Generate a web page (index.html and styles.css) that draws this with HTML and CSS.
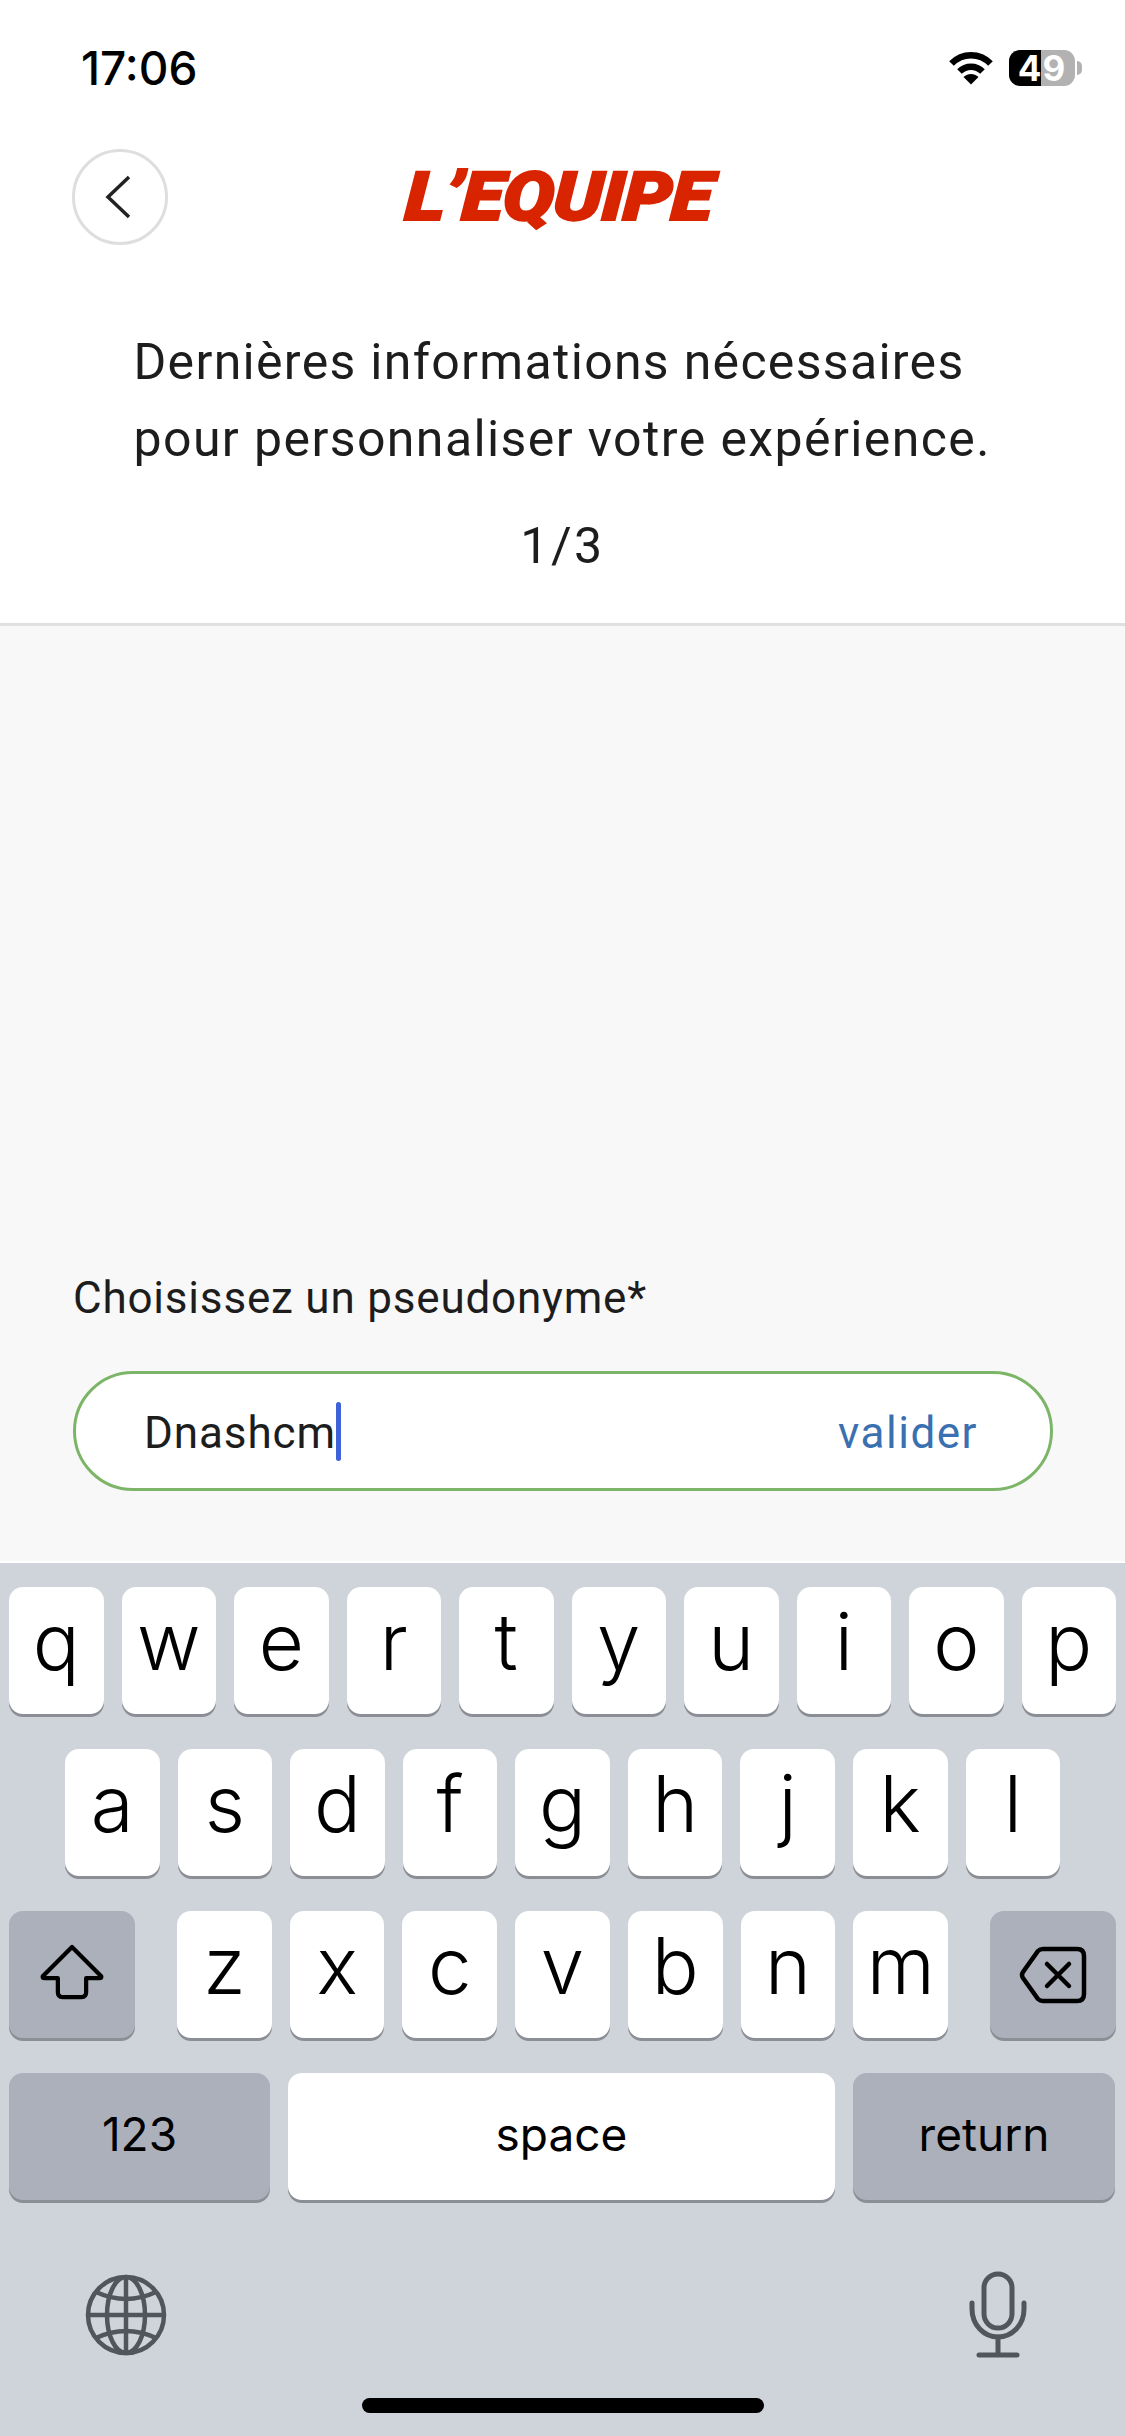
FILE: index.html
```html
<!DOCTYPE html>
<html lang="fr">
<head>
    <meta charset="UTF-8">
    <meta name="viewport" content="width=device-width, initial-scale=1.0">
    <title>L'Équipe - Pseudonyme</title>
    <link rel="stylesheet" href="styles.css">
</head>
<body>
    <header class="top">
        <div class="status-bar">
            <span class="time">17:06</span>
            <div class="status-icons">
                <svg class="wifi" viewBox="0 0 46 34" width="46" height="34">
                    <path d="M3.5 12.5 C14.5 1.5 31.5 1.5 42.5 12.5" fill="none" stroke="#000" stroke-width="6.5"/>
                    <path d="M11.5 20.5 C18 14 28 14 34.5 20.5" fill="none" stroke="#000" stroke-width="6.5"/>
                    <path d="M15.5 26 C20 22 26 22 30.5 26 L23 33.5 Z" fill="#000"/>
                </svg>
                <div class="battery"><span class="battery-level">49</span></div>
                <div class="battery-nub"></div>
            </div>
        </div>

        <nav class="nav">
            <button class="back-btn" type="button">
                <svg viewBox="0 0 26 44" width="26" height="44">
                    <path d="M24 2 L3 22 L24 42" fill="none" stroke="#222" stroke-width="3.5"/>
                </svg>
            </button>
            <div class="logo">L’EQUIPE</div>
            <div></div>
        </nav>

        <div class="intro">
            <p class="intro-text">Dernières informations nécessaires<br><span class="intro-line">pour personnaliser votre expérience.</span></p>
            <p class="step">1/3</p>
        </div>
    </header>

    <main class="content">
        <label class="field-label" for="pseudo">Choisissez un pseudonyme*</label>
        <div class="field">
            <span class="field-value" id="pseudo">Dnashcm</span>
            <span class="caret"></span>
            <span class="field-action">valider</span>
        </div>
    </main>

    <section class="keyboard">
        <div class="kb-row">
            <div class="key">q</div>
            <div class="key">w</div>
            <div class="key">e</div>
            <div class="key">r</div>
            <div class="key">t</div>
            <div class="key">y</div>
            <div class="key">u</div>
            <div class="key">i</div>
            <div class="key">o</div>
            <div class="key">p</div>
        </div>
        <div class="kb-row kb-row-2">
            <div class="key">a</div>
            <div class="key">s</div>
            <div class="key">d</div>
            <div class="key">f</div>
            <div class="key">g</div>
            <div class="key">h</div>
            <div class="key">j</div>
            <div class="key">k</div>
            <div class="key">l</div>
        </div>
        <div class="kb-row kb-row-3">
            <div class="key key-fn key-side">
                <svg class="shift-icon" viewBox="0 0 70 60" width="66" height="57">
                    <path d="M35 3 L4 34 Q3 36 6 36 L20 36 L20 51 Q20 56 25 56 L45 56 Q50 56 50 51 L50 36 L64 36 Q67 36 66 34 Z" fill="none" stroke="#000" stroke-width="4.5" stroke-linejoin="round"/>
                </svg>
            </div>
            <div class="kb-letters">
                <div class="key">z</div>
                <div class="key">x</div>
                <div class="key">c</div>
                <div class="key">v</div>
                <div class="key">b</div>
                <div class="key">n</div>
                <div class="key">m</div>
            </div>
            <div class="key key-fn key-side">
                <svg viewBox="0 0 68 58" width="68" height="58">
                    <path d="M24 3 L58 3 Q65 3 65 10 L65 48 Q65 55 58 55 L24 55 Q21 55 19 53 L4 32 Q2 29 4 26 L19 5 Q21 3 24 3 Z" fill="none" stroke="#000" stroke-width="4.5"/>
                    <path d="M28 18 L50 40 M50 18 L28 40" fill="none" stroke="#000" stroke-width="4.5" stroke-linecap="round"/>
                </svg>
            </div>
        </div>
        <div class="kb-row kb-row-4">
            <div class="key key-fn key-wide key-text">123</div>
            <div class="key key-space key-text">space</div>
            <div class="key key-fn key-wide key-return key-text">return</div>
        </div>
        <div class="kb-bottom">
            <svg viewBox="0 0 84 84" width="84" height="84">
                <g fill="none" stroke="#50565d" stroke-width="4.5">
                    <circle cx="42" cy="42" r="38"/>
                    <ellipse cx="42" cy="42" rx="19" ry="38"/>
                    <path d="M42 4 V80 M4 42 H80"/>
                    <path d="M12 19 Q42 33 72 19 M12 65 Q42 51 72 65"/>
                </g>
            </svg>
            <svg viewBox="0 0 60 88" width="60" height="88">
                <g fill="none" stroke="#50565d" stroke-width="5" stroke-linecap="round">
                    <rect x="16" y="3" width="28" height="54" rx="14"/>
                    <path d="M4 32 V38 C4 54 16 66 30 66 C44 66 56 54 56 38 V32"/>
                    <path d="M30 66 V84 M11 84 H49"/>
                </g>
            </svg>
        </div>
        <div class="home-indicator"></div>
    </section>
</body>
</html>
```

FILE: styles.css
```css
* {
    box-sizing: border-box;
}

body {
    margin: 0;
    width: 1125px;
    height: 2436px;
    display: flex;
    flex-direction: column;
    background-color: #fff;
    font-family: Roboto, sans-serif;
    color: #1d1d1d;
    overflow: hidden;
}

.top {
    height: 626px;
    background: #fff;
    border-bottom: 3px solid #e0e0e0;
}

.status-bar {
    height: 149px;
    padding: 42px 43px 0 81px;
    display: flex;
    justify-content: space-between;
    align-items: flex-start;
}

.time {
    font-family: Inter, sans-serif;
    font-size: 46px;
    line-height: 52px;
    font-weight: 500;
    color: #000;
}

.status-icons {
    display: flex;
    align-items: center;
    margin-top: 8px;
}

.wifi {
    margin-right: 15px;
}

.battery {
    width: 66px;
    height: 36px;
    border-radius: 11px;
    background: linear-gradient(90deg, #000 0, #000 32px, #b2b2b2 32px);
    text-align: center;
}

.battery-level {
    font-family: Inter, sans-serif;
    font-size: 35px;
    line-height: 36px;
    font-weight: 700;
    letter-spacing: 1px;
    color: #fff;
    display: block;
}

.battery-nub {
    width: 5px;
    height: 14px;
    margin-left: 2px;
    background: #b2b2b2;
    border-radius: 0 5px 5px 0;
}

.nav {
    display: grid;
    grid-template-columns: 1fr auto 1fr;
    align-items: center;
    padding-left: 72px;
    height: 96px;
}

.back-btn {
    width: 96px;
    height: 96px;
    padding: 0 5px 0 0;
    border: 3px solid #dedede;
    border-radius: 50%;
    background: #fff;
    display: flex;
    align-items: center;
    justify-content: center;
}

.logo {
    font-family: Roboto, sans-serif;
    font-style: italic;
    font-weight: 900;
    font-size: 68px;
    line-height: 70px;
    letter-spacing: -0.8px;
    color: #d92400;
    -webkit-text-stroke: 2px #d92400;
    margin-left: -80px;
    transform: scaleX(1.13) skewX(-3deg);
}

.intro {
    padding-top: 79px;
}

.intro-text {
    width: 858px;
    margin: 0 auto;
    font-size: 50px;
    line-height: 77px;
    letter-spacing: 1.3px;
    white-space: nowrap;
}

.intro-line {
    letter-spacing: 1.4px;
}

.step {
    margin: 30px 0 0;
    font-size: 50px;
    line-height: 77px;
    letter-spacing: 2.5px;
    text-align: center;
}

.content {
    flex: 1;
    background: #f8f8f8;
    padding: 0 72px 70px 73px;
    display: flex;
    flex-direction: column;
    justify-content: flex-end;
    border-bottom: 2px solid #fff;
}

.field-label {
    font-size: 44px;
    line-height: 56px;
    letter-spacing: 0.8px;
    margin-bottom: 45px;
}

.field {
    height: 120px;
    padding: 0 72px 0 68px;
    border: 3px solid #7cb568;
    border-radius: 60px;
    background: #fff;
    display: flex;
    align-items: center;
    font-size: 44px;
    letter-spacing: 0.9px;
}

.field-value {
    padding-top: 3px;
}

.caret {
    width: 5px;
    height: 59px;
    border-radius: 3px;
    background: #3f62d8;
}

.field-action {
    margin-left: auto;
    padding-top: 3px;
    color: #3a70b0;
    letter-spacing: 1.5px;
}

.keyboard {
    height: 873px;
    padding-top: 24px;
    background: #cfd3da;
    font-family: Inter, sans-serif;
    display: flex;
    flex-direction: column;
}

.kb-row {
    display: flex;
    gap: 18px;
    padding: 0 9px;
    margin-bottom: 35px;
}

.kb-row-2 {
    padding: 0 65px;
}

.kb-row-3 {
    justify-content: space-between;
}

.kb-row-4 {
    padding-right: 10px;
}

.kb-letters {
    display: flex;
    gap: 18px;
    flex: 1;
    padding: 0 24px;
}

.key {
    flex: 1;
    height: 127px;
    border-radius: 14px;
    background: #fff;
    box-shadow: 0 3px 0 #8b8e94;
    display: flex;
    align-items: center;
    justify-content: center;
    font-size: 78px;
    font-weight: 300;
    color: #000;
    padding-bottom: 18px;
}

.key-fn {
    background: #abb0bb;
}

.key-side {
    flex: 0 0 126px;
    padding-bottom: 0;
}

.shift-icon {
    margin-bottom: 4px;
}

.key-wide {
    flex: 0 0 261px;
}

.key-return {
    flex-basis: 262px;
}

.key-space {
    flex: 1;
}

.key-text {
    font-size: 46px;
    font-weight: 400;
    padding-bottom: 6px;
}

.kb-bottom {
    display: flex;
    justify-content: space-between;
    padding: 36px 97px 0 84px;
    align-items: center;
}

.home-indicator {
    width: 402px;
    height: 15px;
    margin: 39px auto 0;
    border-radius: 8px;
    background: #000;
}
```
